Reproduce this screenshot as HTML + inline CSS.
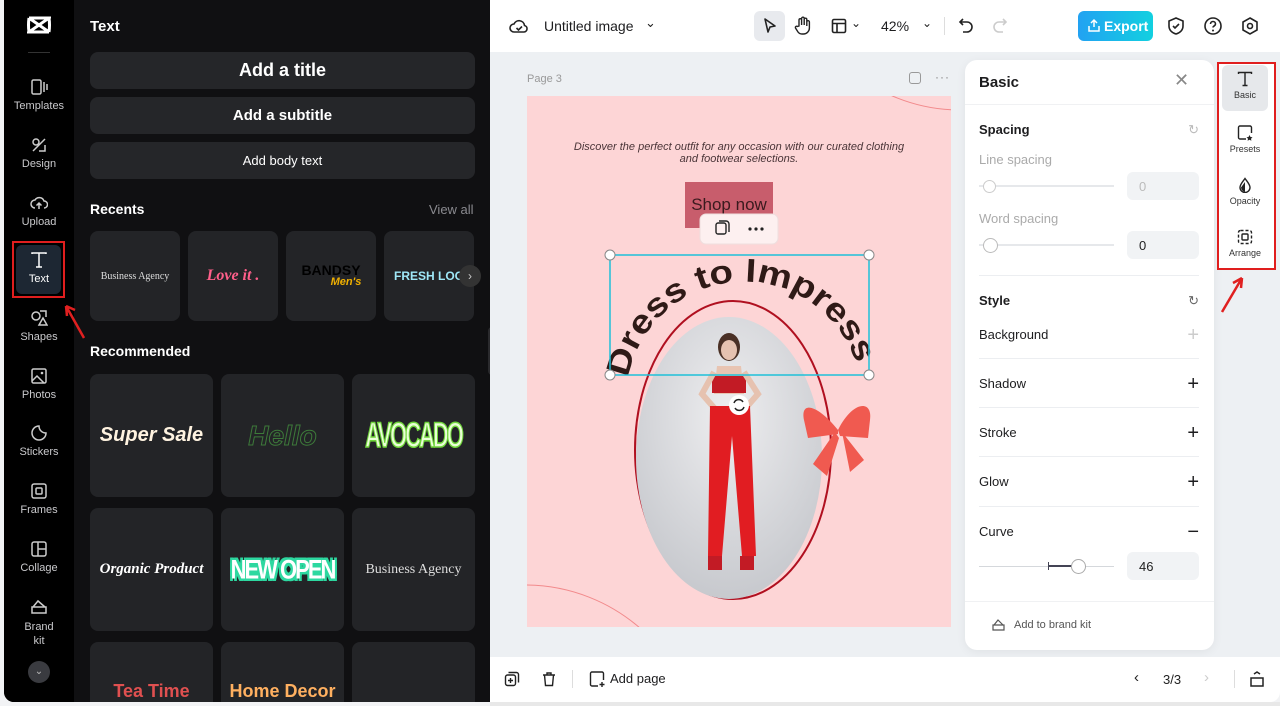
<!DOCTYPE html>
<html style="overflow:hidden"><head><meta charset="utf-8"><style>
*{box-sizing:border-box;margin:0;padding:0}
html,body{width:1280px;height:706px;overflow:hidden}
body{background:#f2f3f5;font-family:"Liberation Sans",sans-serif;position:relative}
.abs{position:absolute}
#dark{left:4px;top:0;width:486px;height:702px;background:#101012;border-bottom-left-radius:10px;overflow:hidden}
#side{left:0;top:0;width:70px;height:702px;background:#000}
.nav{position:absolute;left:0;width:70px;text-align:center;color:#c9c9cc;font-size:11px}
.nav svg{display:block;margin:0 auto 4px}
.btn{position:absolute;left:86px;width:385px;background:#252629;border-radius:8px;color:#fff;text-align:center;font-weight:bold}
.card{position:absolute;background:#232427;border-radius:8px;display:flex;align-items:center;justify-content:center;overflow:hidden;white-space:nowrap}
.h{color:#fff;font-weight:bold;font-size:14px}
.row{position:absolute;left:979px;width:220px;font-size:13px;color:#1d1d1f}
.plus{position:absolute;right:0;top:0;font-size:20px;font-weight:300;line-height:16px}
.sep{position:absolute;left:979px;width:220px;height:1px;background:#eceef1}
.tool{position:absolute;left:1222px;width:46px;text-align:center;font-size:9px;color:#333}
</style></head><body>

<div id="dark" class="abs">
 <div id="side" class="abs">
  <svg class="abs" style="left:23px;top:16px" width="24" height="18" viewBox="0 0 24 18"><path d="M2 2h20L2 16h20M2 2l20 14M2 2c0 0-1 7 0 14M22 2c0 0 1 7 0 14" stroke="#fff" stroke-width="3" fill="none"/></svg>
  <div class="abs" style="left:24px;top:52px;width:22px;height:1px;background:#333"></div>
  <div class="nav" style="top:78px"><svg width="18" height="18" viewBox="0 0 18 18"><rect x="2" y="2" width="9" height="14" rx="1.5" stroke="#ccc" fill="none" stroke-width="1.5"/><path d="M14 4v10M17 6v6" stroke="#ccc" stroke-width="1.5"/></svg>Templates</div>
  <div class="nav" style="top:136px"><svg width="18" height="18" viewBox="0 0 18 18"><circle cx="6" cy="6" r="3" stroke="#ccc" fill="none" stroke-width="1.5"/><path d="M3 15l12-12M9 15h6v-6" stroke="#ccc" stroke-width="1.5" fill="none"/></svg>Design</div>
  <div class="nav" style="top:194px"><svg width="18" height="18" viewBox="0 0 18 18"><path d="M5 14a4 4 0 010-8 5 5 0 019 1 3.5 3.5 0 010 7M9 15V9M6.5 11.5L9 9l2.5 2.5" stroke="#ccc" fill="none" stroke-width="1.5"/></svg>Upload</div>
  <div class="abs" style="left:8px;top:241px;width:53px;height:57px;border:2px solid #e01e1e;"><div style="position:absolute;left:2px;top:2px;right:2px;bottom:2px;background:#1d2733;border-radius:6px"></div></div>
  <div class="nav" style="top:251px;color:#fff"><svg width="18" height="18" viewBox="0 0 18 18"><path d="M2 3V2h14v1M9 2v14M6 16h6" stroke="#fff" fill="none" stroke-width="1.5"/></svg>Text</div>
  <svg class="abs" style="left:56px;top:300px" width="28" height="40"><path d="M24 38L6 6M6 6l1 10M6 6l9 4" stroke="#e02020" stroke-width="2.5" fill="none"/></svg>
  <div class="nav" style="top:309px"><svg width="18" height="18" viewBox="0 0 18 18"><circle cx="6" cy="7" r="4" stroke="#ccc" fill="none" stroke-width="1.5"/><path d="M10 2h6v6M9 16l4-7 4 7z" stroke="#ccc" fill="none" stroke-width="1.5"/></svg>Shapes</div>
  <div class="nav" style="top:367px"><svg width="18" height="18" viewBox="0 0 18 18"><rect x="2" y="2" width="14" height="14" rx="1.5" stroke="#ccc" fill="none" stroke-width="1.5"/><path d="M2 14l5-5 7 7" stroke="#ccc" fill="none" stroke-width="1.5"/><circle cx="12" cy="6" r="1.3" fill="#ccc"/></svg>Photos</div>
  <div class="nav" style="top:424px"><svg width="18" height="18" viewBox="0 0 18 18"><path d="M9 2a7 7 0 107 7c-4 0-7-3-7-7z" stroke="#ccc" fill="none" stroke-width="1.5"/></svg>Stickers</div>
  <div class="nav" style="top:482px"><svg width="18" height="18" viewBox="0 0 18 18"><rect x="2" y="2" width="14" height="14" rx="2" stroke="#ccc" fill="none" stroke-width="1.5"/><rect x="6" y="6" width="6" height="6" rx="1" stroke="#ccc" fill="none" stroke-width="1.5"/></svg>Frames</div>
  <div class="nav" style="top:540px"><svg width="18" height="18" viewBox="0 0 18 18"><rect x="2" y="2" width="14" height="14" rx="2" stroke="#ccc" fill="none" stroke-width="1.5"/><path d="M8 2v14M8 9h8" stroke="#ccc" stroke-width="1.5"/></svg>Collage</div>
  <div class="nav" style="top:598px;line-height:14px"><svg width="18" height="18" viewBox="0 0 18 18"><path d="M2 9h14v6H2zM3 9l5-6 7 6" stroke="#ccc" fill="none" stroke-width="1.5"/></svg>Brand<br>kit</div>
  <div class="abs" style="left:24px;top:661px;width:22px;height:22px;border-radius:50%;background:#3a3b40;color:#bbb;font-size:10px;text-align:center;line-height:22px">⌄</div>
 </div>
 <div class="abs h" style="left:86px;top:18px;font-size:15px">Text</div>
 <div class="btn" style="top:52px;height:37px;line-height:37px;font-size:18px">Add a title</div>
 <div class="btn" style="top:97px;height:37px;line-height:37px;font-size:15px">Add a subtitle</div>
 <div class="btn" style="top:142px;height:37px;line-height:37px;font-size:13px;font-weight:normal">Add body text</div>
 <div class="abs h" style="left:86px;top:201px">Recents</div>
 <div class="abs" style="left:425px;top:202px;color:#8a8a8f;font-size:13px">View all</div>
 <div class="card" style="left:86px;top:231px;width:90px;height:90px;color:#ddd;font-family:'Liberation Serif',serif;font-size:10px">Business Agency</div>
 <div class="card" style="left:184px;top:231px;width:90px;height:90px;color:#ff5f8a;font-family:'Liberation Serif',serif;font-weight:bold;font-style:italic;font-size:16px">Love it .</div>
 <div class="card" style="left:282px;top:231px;width:90px;height:90px;color:#000;font-weight:bold;font-size:14px;flex-direction:column;line-height:12px">BANDSY<span style="color:#f0b000;font-style:italic;font-size:11px;margin-left:30px">Men's</span></div>
 <div class="card" style="left:380px;top:231px;width:90px;height:90px;color:#9fe8f8;font-weight:bold;font-size:12px;justify-content:flex-start;padding-left:10px">FRESH LOOK</div>
 <div class="abs" style="left:455px;top:265px;width:22px;height:22px;border-radius:50%;background:#333;color:#ccc;font-size:12px;text-align:center;line-height:22px">›</div>
 <div class="abs h" style="left:86px;top:343px">Recommended</div>
 <div class="card" style="left:86px;top:374px;width:123px;height:123px;color:#fff3e0;font-weight:bold;font-style:italic;font-size:20px">Super Sale</div>
 <div class="card" style="left:217px;top:374px;width:123px;height:123px;color:transparent;-webkit-text-stroke:1px #3d7a3a;font-weight:bold;font-style:italic;font-size:28px">Hello</div>
 <div class="card" style="left:348px;top:374px;width:123px;height:123px;color:#e9ffd6;-webkit-text-stroke:1px #6fd53a;font-weight:bold;font-size:22px;letter-spacing:-2px"><span style="display:inline-block;transform:scaleY(1.6)">AVOCADO</span></div>
 <div class="card" style="left:86px;top:508px;width:123px;height:123px;color:#fff;font-family:'Liberation Serif',serif;font-weight:bold;font-style:italic;font-size:15px">Organic Product</div>
 <div class="card" style="left:217px;top:508px;width:123px;height:123px;color:#fff;font-weight:bold;font-size:22px;letter-spacing:-2px"><span style="display:inline-block;transform:scaleY(1.2);text-shadow:2px 2px 0 #2dd8a0,-2px -2px 0 #2dd8a0,2px -2px 0 #2dd8a0,-2px 2px 0 #2dd8a0">NEW OPEN</span></div>
 <div class="card" style="left:348px;top:508px;width:123px;height:123px;color:#ddd;font-family:'Liberation Serif',serif;font-size:14px">Business Agency</div>
 <div class="card" style="left:86px;top:642px;width:123px;height:60px;align-items:flex-end;color:#e05050;font-weight:bold;font-size:18px;border-radius:8px 8px 0 0">Tea Time</div>
 <div class="card" style="left:217px;top:642px;width:123px;height:60px;align-items:flex-end;color:#ffb060;font-weight:bold;font-size:18px;border-radius:8px 8px 0 0">Home Decor</div>
 <div class="card" style="left:348px;top:642px;width:123px;height:60px;border-radius:8px 8px 0 0"></div>
 <div class="abs" style="left:484px;top:327px;width:8px;height:48px;background:#2a2a2d;border-radius:4px"></div>
</div>

<!-- top bar -->
<div class="abs" style="left:490px;top:0;width:790px;height:52px;background:#fff"></div>
<svg class="abs" style="left:509px;top:17px" width="20" height="18" viewBox="0 0 20 18"><path d="M5 15a4 4 0 010-8 5.5 5.5 0 0110.5 1.5A3.3 3.3 0 0115 15z" stroke="#222" fill="none" stroke-width="1.6"/><path d="M7.5 11l2 2 3.5-3.5" stroke="#222" fill="none" stroke-width="1.6"/></svg>
<div class="abs" style="left:544px;top:18px;font-size:14px;color:#1d1d1f">Untitled image</div>
<div class="abs" style="left:645px;top:15px;font-size:13px;color:#222">⌄</div>
<div class="abs" style="left:754px;top:11px;width:31px;height:30px;background:#e8eaee;border-radius:6px"></div>
<svg class="abs" style="left:762px;top:17px" width="16" height="18" viewBox="0 0 16 18"><path d="M3 2l10 7-5 1-2 5z" stroke="#222" fill="none" stroke-width="1.6" stroke-linejoin="round"/></svg>
<svg class="abs" style="left:794px;top:16px" width="18" height="19" viewBox="0 0 18 19"><path d="M5 10V4a1.3 1.3 0 012.6 0v5V2.5a1.3 1.3 0 012.6 0V9V3.5a1.3 1.3 0 012.6 0V10V6a1.3 1.3 0 012.6 0v6a6 6 0 01-6 6H8a5 5 0 01-4-2l-2.5-4a1.3 1.3 0 012-1.5z" stroke="#222" fill="none" stroke-width="1.4"/></svg>
<svg class="abs" style="left:831px;top:18px" width="16" height="16" viewBox="0 0 16 16"><rect x="1.5" y="1.5" width="13" height="13" rx="1.5" stroke="#222" fill="none" stroke-width="1.6"/><path d="M1.5 5.5h13M6 5.5v9" stroke="#222" stroke-width="1.6"/></svg>
<div class="abs" style="left:851px;top:16px;font-size:12px;color:#222">⌄</div>
<div class="abs" style="left:881px;top:18px;font-size:14px;color:#1d1d1f">42%</div>
<div class="abs" style="left:922px;top:16px;font-size:12px;color:#222">⌄</div>
<div class="abs" style="left:944px;top:17px;width:1px;height:18px;background:#ddd"></div>
<svg class="abs" style="left:958px;top:17px" width="16" height="17" viewBox="0 0 16 17"><path d="M5 2L2 5l3 3M2 5h7a5 5 0 010 10H5" stroke="#222" fill="none" stroke-width="1.6"/></svg>
<svg class="abs" style="left:992px;top:17px" width="16" height="17" viewBox="0 0 16 17"><path d="M11 2l3 3-3 3M14 5H7a5 5 0 000 10h4" stroke="#ccc" fill="none" stroke-width="1.6"/></svg>
<div class="abs" style="left:1078px;top:11px;width:75px;height:30px;border-radius:6px;background:linear-gradient(90deg,#22a2f2,#12d0e0);color:#fff;font-size:14px;font-weight:bold;line-height:30px;padding-left:26px">Export</div>
<svg class="abs" style="left:1087px;top:18px" width="14" height="15" viewBox="0 0 14 15"><path d="M7 9V2M4 5l3-3 3 3M2 8v5h10V8" stroke="#fff" fill="none" stroke-width="1.5"/></svg>
<svg class="abs" style="left:1167px;top:16px" width="18" height="20" viewBox="0 0 18 20"><path d="M9 2l7 3v5c0 4-3 7-7 8-4-1-7-4-7-8V5z" stroke="#222" fill="none" stroke-width="1.6"/><path d="M6 10l2 2 4-4" stroke="#222" fill="none" stroke-width="1.6"/></svg>
<svg class="abs" style="left:1203px;top:16px" width="20" height="20" viewBox="0 0 20 20"><circle cx="10" cy="10" r="8" stroke="#222" fill="none" stroke-width="1.6"/><path d="M7.5 8a2.5 2.5 0 115 0c0 1.8-2.5 2-2.5 3.5" stroke="#222" fill="none" stroke-width="1.6"/><circle cx="10" cy="14.5" r="1" fill="#222"/></svg>
<svg class="abs" style="left:1240px;top:16px" width="20" height="20" viewBox="0 0 20 20"><path d="M10 2l7 4v8l-7 4-7-4V6z" stroke="#222" fill="none" stroke-width="1.6"/><circle cx="10" cy="10" r="2.5" stroke="#222" fill="none" stroke-width="1.6"/></svg>

<!-- workspace -->
<div class="abs" style="left:490px;top:52px;width:790px;height:605px;background:#edf0f3"></div>
<div class="abs" style="left:527px;top:73px;font-size:11px;color:#999">Page 3</div>
<div class="abs" style="left:909px;top:72px;width:12px;height:12px;border:1.5px solid #999;border-radius:3px"></div>
<div class="abs" style="left:935px;top:70px;font-size:12px;color:#888;letter-spacing:1px">···</div>

<svg class="abs" style="left:0;top:0" width="1280" height="706" viewBox="0 0 1280 706">
 <defs>
  <clipPath id="pg"><rect x="527" y="96" width="424" height="531"/></clipPath>
  <radialGradient id="bg" cx="0.5" cy="0.35" r="0.7"><stop offset="0" stop-color="#eeeef0"/><stop offset="1" stop-color="#c4c6cb"/></radialGradient>
 </defs>
 <rect x="527" y="96" width="424" height="531" fill="#fdd5d6"/>
 <g clip-path="url(#pg)" fill="none" stroke="#f28a8c" stroke-width="1">
  <circle cx="960" cy="-60" r="170"/>
  <circle cx="525" cy="760" r="175"/>
 </g>
 <text x="739" y="150" text-anchor="middle" font-family="Liberation Sans" font-style="italic" font-size="11" fill="#4a3538">Discover the perfect outfit for any occasion with our curated clothing</text>
 <text x="739" y="162" text-anchor="middle" font-family="Liberation Sans" font-style="italic" font-size="11" fill="#4a3538">and footwear selections.</text>
 <rect x="685" y="182" width="88" height="46" fill="#c85d6c"/>
 <text x="729" y="210" text-anchor="middle" font-family="Liberation Sans Narrow, Liberation Sans" font-size="17" fill="#3a1a1e">Shop now</text>
 <ellipse cx="733" cy="450" rx="98" ry="149" fill="none" stroke="#b01020" stroke-width="2"/>
 <ellipse cx="729" cy="458" rx="93" ry="141" fill="url(#bg)"/>
 <ellipse cx="729" cy="347" rx="11" ry="14" fill="#4a3025"/>
 <ellipse cx="729" cy="350" rx="8" ry="10" fill="#e6c2b0"/>
 <path d="M717 366h24l3 28h-30z" fill="#e8c4b2"/>
 <rect x="712" y="376" width="34" height="17" fill="#c21b25"/>
 <path d="M714 372l-12 22 14 16M744 372l14 22-14 16" stroke="#e6c2b0" stroke-width="6" fill="none"/>
 <path d="M710 406h40l6 150h-14l-10-120-10 120h-14z" fill="#e11d22"/>
 <rect x="708" y="556" width="14" height="14" fill="#c21b25"/><rect x="740" y="556" width="14" height="14" fill="#c21b25"/>
 <path d="M838 430c-20-25-38-30-34-10l4 18 30-4zM838 430c15-30 35-30 32-10l-2 18-28-2z" fill="#f05a50"/>
 <path d="M835 432l-22 32 14 12 12-38zM842 432l8 40 14-12z" fill="#f05a50"/>
 <circle cx="739" cy="405" r="10" fill="#fff"/>
 <path d="M734 403a5 5 0 019-1M744 407a5 5 0 01-9 1" stroke="#222" stroke-width="1.5" fill="none"/>
 <path id="arc" d="M628 378 A118 118 0 0 1 860 378" fill="none"/>
 <text font-family="Liberation Sans" font-weight="bold" font-size="33" fill="#2f1a17"><textPath href="#arc" textLength="312" lengthAdjust="spacingAndGlyphs">Dress to Impress</textPath></text>
 <rect x="610" y="255" width="259" height="120" fill="none" stroke="#1fc0d8" stroke-width="1.5"/>
 <g fill="#fff" stroke="#888" stroke-width="1"><circle cx="610" cy="255" r="5"/><circle cx="869" cy="255" r="5"/><circle cx="610" cy="375" r="5"/><circle cx="869" cy="375" r="5"/></g>
 <rect x="700" y="214" width="78" height="30" rx="6" fill="#fdf0f0" stroke="#eedede"/>
 <rect x="716" y="223" width="10" height="11" rx="2" fill="none" stroke="#222" stroke-width="1.4"/><path d="M719 221h7a3 3 0 013 3v8" stroke="#222" fill="none" stroke-width="1.4"/>
 <g fill="#222"><circle cx="750" cy="229" r="1.6"/><circle cx="756" cy="229" r="1.6"/><circle cx="762" cy="229" r="1.6"/></g>
</svg>

<!-- basic panel -->
<div class="abs" style="left:965px;top:60px;width:249px;height:590px;background:#fff;border-radius:12px;box-shadow:0 2px 10px rgba(0,0,0,.06)"></div>
<div class="abs" style="left:979px;top:74px;font-size:15px;font-weight:bold;color:#1d1d1f">Basic</div>
<div class="abs" style="left:1174px;top:70px;font-size:18px;color:#888;font-weight:300">✕</div>
<div class="abs" style="left:965px;top:104px;width:249px;height:1px;background:#f0f1f3"></div>
<div class="row" style="top:122px;font-weight:bold">Spacing<span class="plus" style="font-size:13px;color:#bbb">↻</span></div>
<div class="row" style="top:152px;color:#aaa">Line spacing</div>
<div class="abs" style="left:979px;top:185px;width:135px;height:2px;background:#e6e8eb"></div>
<div class="abs" style="left:983px;top:180px;width:13px;height:13px;border-radius:50%;background:#fff;border:1px solid #ccc"></div>
<div class="abs" style="left:1127px;top:172px;width:72px;height:28px;border-radius:6px;background:#f1f3f5;color:#bbb;font-size:13px;padding:7px 12px">0</div>
<div class="row" style="top:211px;color:#aaa">Word spacing</div>
<div class="abs" style="left:979px;top:244px;width:135px;height:2px;background:#e6e8eb"></div>
<div class="abs" style="left:983px;top:238px;width:15px;height:15px;border-radius:50%;background:#fff;border:1px solid #bbb"></div>
<div class="abs" style="left:1127px;top:231px;width:72px;height:28px;border-radius:6px;background:#f1f3f5;color:#222;font-size:13px;padding:7px 12px">0</div>
<div class="sep" style="top:275px"></div>
<div class="row" style="top:293px;font-weight:bold">Style<span class="plus" style="font-size:13px;color:#666">↻</span></div>
<div class="row" style="top:327px">Background<span class="plus" style="color:#ccc">+</span></div>
<div class="sep" style="top:358px"></div>
<div class="row" style="top:376px">Shadow<span class="plus">+</span></div>
<div class="sep" style="top:407px"></div>
<div class="row" style="top:425px">Stroke<span class="plus">+</span></div>
<div class="sep" style="top:456px"></div>
<div class="row" style="top:474px">Glow<span class="plus">+</span></div>
<div class="sep" style="top:506px"></div>
<div class="row" style="top:524px">Curve<span class="plus">−</span></div>
<div class="abs" style="left:979px;top:566px;width:135px;height:1px;background:#d5d8dc"></div>
<div class="abs" style="left:1048px;top:565px;width:28px;height:2px;background:#445"></div>
<div class="abs" style="left:1048px;top:562px;width:1px;height:8px;background:#445"></div>
<div class="abs" style="left:1071px;top:559px;width:15px;height:15px;border-radius:50%;background:#fff;border:1px solid #aaa"></div>
<div class="abs" style="left:1127px;top:552px;width:72px;height:28px;border-radius:6px;background:#f1f3f5;color:#222;font-size:13px;padding:7px 12px">46</div>
<div class="abs" style="left:965px;top:601px;width:249px;height:1px;background:#f0f1f3"></div>
<svg class="abs" style="left:992px;top:619px" width="13" height="13" viewBox="0 0 13 13"><path d="M1 6h11v5H1zM2 6l4-5 5 5" stroke="#555" fill="none" stroke-width="1.2"/></svg>
<div class="abs" style="left:1014px;top:619px;font-size:11px;color:#555">Add to brand kit</div>

<!-- right tool strip -->
<div class="abs" style="left:1217px;top:62px;width:59px;height:208px;border:2px solid #e01e1e;background:#fff"></div>
<div class="abs" style="left:1222px;top:65px;width:46px;height:46px;background:#e6e8eb;border-radius:6px"></div>
<div class="tool" style="top:71px"><svg width="16" height="16" viewBox="0 0 16 16" style="display:block;margin:0 auto 3px"><path d="M1.5 3V1.5h13V3M8 1.5v13M5.5 14.5h5" stroke="#222" fill="none" stroke-width="1.4"/></svg>Basic</div>
<div class="tool" style="top:125px"><svg width="16" height="16" viewBox="0 0 16 16" style="display:block;margin:0 auto 3px"><path d="M9 14H3a1.5 1.5 0 01-1.5-1.5v-10A1.5 1.5 0 013 1h10a1.5 1.5 0 011.5 1.5V8" stroke="#222" fill="none" stroke-width="1.4"/><path d="M12.5 10l1 2 2 .3-1.5 1.4.4 2-1.9-1-1.9 1 .4-2-1.5-1.4 2-.3z" fill="#222"/></svg>Presets</div>
<div class="tool" style="top:177px"><svg width="16" height="16" viewBox="0 0 16 16" style="display:block;margin:0 auto 3px"><path d="M8 1.5c-2.5 3.5-5 6-5 9a5 5 0 0010 0c0-3-2.5-5.5-5-9z" stroke="#222" fill="none" stroke-width="1.4"/><path d="M8 5v10a5 5 0 01-4-4.5z" fill="#222"/></svg>Opacity</div>
<div class="tool" style="top:229px"><svg width="16" height="16" viewBox="0 0 16 16" style="display:block;margin:0 auto 3px"><rect x="1.5" y="1.5" width="13" height="13" rx="2" stroke="#222" fill="none" stroke-width="1.4" stroke-dasharray="3 2"/><rect x="5" y="5" width="6" height="6" rx="1" stroke="#222" fill="none" stroke-width="1.4"/></svg>Arrange</div>
<svg class="abs" style="left:1218px;top:272px" width="30" height="42"><path d="M4 40L24 6M24 6l-9 5M24 6l-1 10" stroke="#e02020" stroke-width="2.5" fill="none"/></svg>

<!-- bottom bar -->
<div class="abs" style="left:490px;top:657px;width:790px;height:45px;background:#fff;border-bottom-right-radius:10px"></div>
<div class="abs" style="left:490px;top:702px;width:790px;height:4px;background:#e8e8e8"></div>
<svg class="abs" style="left:504px;top:671px" width="16" height="16" viewBox="0 0 16 16"><rect x="1.5" y="4" width="10" height="10.5" rx="2" stroke="#222" fill="none" stroke-width="1.4"/><path d="M4.5 1.5h8a2 2 0 012 2v8M6.5 7v5M4 9.5h5" stroke="#222" fill="none" stroke-width="1.4"/></svg>
<svg class="abs" style="left:541px;top:671px" width="16" height="16" viewBox="0 0 16 16"><path d="M2 4h12M6 4V2h4v2M3.5 4l1 10.5h7l1-10.5" stroke="#222" fill="none" stroke-width="1.4"/></svg>
<div class="abs" style="left:572px;top:670px;width:1px;height:18px;background:#ddd"></div>
<svg class="abs" style="left:589px;top:671px" width="17" height="17" viewBox="0 0 17 17"><path d="M9 15H3a1.5 1.5 0 01-1.5-1.5v-11A1.5 1.5 0 013 1h10a1.5 1.5 0 011.5 1.5V9M13 11v5M10.5 13.5h5" stroke="#222" fill="none" stroke-width="1.4"/></svg>
<div class="abs" style="left:610px;top:671px;font-size:13px;color:#1d1d1f">Add page</div>
<div class="abs" style="left:1134px;top:669px;font-size:15px;color:#222">‹</div>
<div class="abs" style="left:1163px;top:672px;font-size:13px;color:#222">3/3</div>
<div class="abs" style="left:1204px;top:669px;font-size:15px;color:#ccc">›</div>
<div class="abs" style="left:1234px;top:670px;width:1px;height:18px;background:#ddd"></div>
<svg class="abs" style="left:1249px;top:670px" width="16" height="18" viewBox="0 0 16 18"><path d="M2 8h12v8H2zM5 4l3-2 3 2" stroke="#222" fill="none" stroke-width="1.5"/></svg>
</body></html>
